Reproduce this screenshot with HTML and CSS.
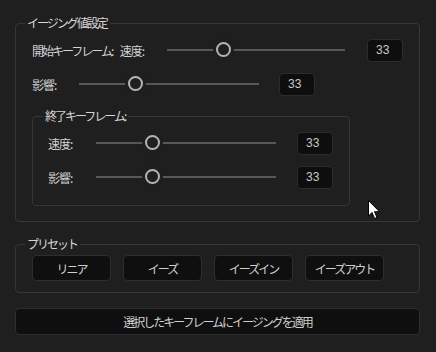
FILE: index.html
```html
<!DOCTYPE html>
<html lang="ja">
<head>
    <meta charset="UTF-8">
    <title>イージング</title>
    <link rel="stylesheet" href="styles.css">
</head>
<body>
    <div class="panel">
        <fieldset class="group main-group">
            <legend>イージング値設定</legend>
            <div class="row">
                <span class="label start-label">開始キーフレーム:</span>
                <span class="label short">速度:</span>
                <div class="slider wide"><span class="thumb"></span></div>
                <div class="spin gap22">33</div>
            </div>
            <div class="row">
                <span class="label short">影響:</span>
                <div class="slider"><span class="thumb"></span></div>
                <div class="spin gap20">33</div>
            </div>

            <fieldset class="group sub-group">
                <legend>終了キーフレーム:</legend>
                <div class="row">
                    <span class="label short">速度:</span>
                    <div class="slider"><span class="thumb"></span></div>
                    <div class="spin gap21">33</div>
                </div>
                <div class="row">
                    <span class="label short">影響:</span>
                    <div class="slider"><span class="thumb"></span></div>
                    <div class="spin gap21">33</div>
                </div>
            </fieldset>
        </fieldset>

        <fieldset class="group preset-group">
            <legend>プリセット</legend>
            <div class="presets">
                <button>リニア</button>
                <button>イーズ</button>
                <button>イーズイン</button>
                <button>イーズアウト</button>
            </div>
        </fieldset>

        <button class="apply">選択したキーフレームにイージングを適用</button>
    </div>

    <svg class="cursor" width="13" height="20" viewBox="0 0 13 20">
        <path d="M0.5 0.5 L0.5 16 L4 12.5 L6.6 18.5 L9 17.5 L6.5 11.7 L11.5 11.7 Z" fill="#fff" stroke="#000" stroke-width="1"/>
    </svg>
</body>
</html>
```

FILE: styles.css
```css
body {
    margin: 0;
    background-color: #1f1f1f;
    color: #d2d2d2;
    font-family: "Noto Sans CJK JP", "Noto Sans", sans-serif;
    font-size: 12px;
    letter-spacing: -2px;
    width: 436px;
    height: 352px;
    overflow: hidden;
    position: relative;
}
.panel {
    padding: 15px 16px 0 15px;
}
.group {
    margin: 0;
    border: 1px solid #363636;
    border-radius: 4px;
    min-width: 0;
}
.group legend {
    line-height: 16px;
    padding: 0 3px 0 2px;
    margin-left: -7px;
    color: #d6d6d6;
}
.main-group {
    padding: 8px 16px 15px 16px;
}
.sub-group {
    width: 286px;
    margin-top: 13px;
    padding: 8px 15px 17px 15px;
}
.sub-group legend {
    margin-left: -5px;
}
.sub-group .row + .row {
    margin-top: 12px;
}
.row {
    display: flex;
    align-items: center;
    height: 22px;
}
.row + .row {
    margin-top: 12px;
}
.label {
    white-space: nowrap;
}
.start-label {
    width: 88px;
}
.short {
    width: 47px;
    letter-spacing: -1px;
}
.sub-group .short {
    width: 48px;
}
.slider {
    position: relative;
    width: 180px;
    height: 2px;
    background-color: #585858;
}
.slider.wide {
    width: 179px;
}
.thumb {
    position: absolute;
    left: 49px;
    top: -7px;
    width: 11px;
    height: 11px;
    border: 2px solid #b4b4b4;
    border-radius: 50%;
    background-color: #1f1f1f;
    box-shadow: 0 0 0 3px #1f1f1f;
}
.spin {
    box-sizing: border-box;
    width: 36px;
    height: 23px;
    padding-left: 8px;
    line-height: 21px;
    background-color: #0e0e0e;
    border: 1px solid #2c2c2c;
    border-radius: 4px;
    color: #c8c8c8;
    letter-spacing: 0;
    font-family: "Liberation Sans", "Noto Sans", sans-serif;
}
.gap22 { margin-left: 22px; }
.gap20 { margin-left: 20px; }
.gap21 { margin-left: 21px; }
.preset-group {
    margin-top: 14px;
    padding: 3px 16px 11px 16px;
}
.presets {
    display: flex;
    gap: 12px;
}
button {
    font-family: inherit;
    font-size: 12px;
    letter-spacing: -2px;
    color: #cfcfcf;
    background-color: #0f0f0f;
    border: 1px solid #2e2e2e;
    border-radius: 4px;
    padding: 0;
    cursor: pointer;
}
.presets button {
    width: 79px;
    height: 26px;
}
.apply {
    display: block;
    width: 405px;
    height: 27px;
    margin-top: 15px;
}
.cursor {
    position: absolute;
    left: 368px;
    top: 200px;
}
```
